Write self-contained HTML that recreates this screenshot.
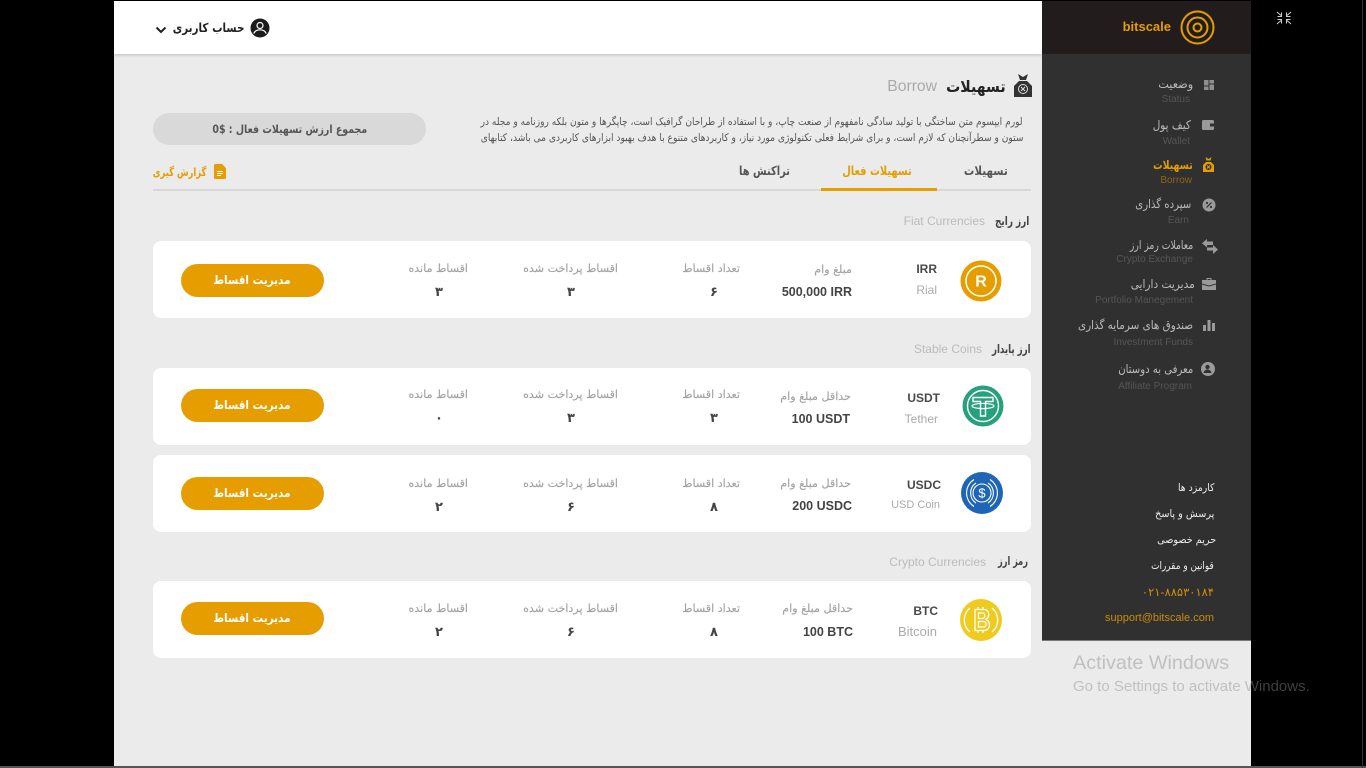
<!DOCTYPE html>
<html lang="fa"><head><meta charset="utf-8"><title>bitscale</title>
<style>
html,body{margin:0;padding:0;width:1366px;height:768px;overflow:hidden;background:#000;font-family:"Liberation Sans","DejaVu Sans",sans-serif}
.a{position:absolute}
.t{position:absolute;white-space:nowrap;line-height:18px;height:18px;margin-top:-8px}
.p{direction:rtl;font-family:"DejaVu Sans","Liberation Sans",sans-serif;transform-origin:100% 50%;transform:scaleX(var(--s,1))}
.c{transform-origin:50% 50%;transform:translateX(50%) scaleX(var(--s,1))}
.card{position:absolute;left:153px;width:878px;height:77px;background:#fff;border-radius:8px}
.btn{position:absolute;left:181px;width:143px;height:33px;background:#e59d00;border-radius:17px}
.lb{font-size:11.100px;color:#a3a3a3;-webkit-text-stroke:.15px #a3a3a3;margin-top:-7px}
.v{font-size:13px;color:#444;font-weight:bold;margin-top:-7px}
.sym{font-size:12px;font-weight:bold;color:#4a4a4a}
.nm{font-size:12px;color:#aaa}
.bt{font-size:12px;color:#fff;font-weight:bold;--s:.87}
.am{font-size:12.500px;font-weight:bold;color:#444}
.m1{font-size:12px;color:#bbb;margin-top:-9px}
.m2{font-size:10px;color:#555;margin-top:-7px}
.f{font-size:10.500px;color:#eee;margin-top:-9px}
svg{position:absolute;display:block}
</style></head><body>

<div class="a" style="left:114px;top:1px;width:1137px;height:765px;background:#ebebeb"></div>
<div class="a" style="left:0;top:766px;width:1366px;height:2px;background:#555"></div>
<div class="a" style="left:1362px;top:0;width:1px;height:768px;background:#333"></div>
<div class="a" style="left:114px;top:1px;width:928px;height:53px;background:#fff;box-shadow:0 1px 3px rgba(0,0,0,.2)"></div>

<!-- sidebar -->
<div class="a" style="left:1042px;top:1px;width:209px;height:640px;background:#303030;border-bottom:1px solid #777;box-sizing:border-box"></div>
<div class="a" style="left:1042px;top:1px;width:209px;height:53px;background:#231c1c"></div>
<div class="t" style="right:195px;top:26px;font-size:13px;font-weight:bold;color:#e59d00">bitscale</div>
<svg style="left:1180px;top:10px" width="35" height="35" viewBox="0 0 35 35" fill="none" stroke="#e59d00" stroke-width="2"><circle cx="17.500" cy="17.500" r="16"/><circle cx="17.500" cy="17.500" r="10"/><circle cx="17.500" cy="17.500" r="4"/></svg>

<svg style="left:1276px;top:11px" width="16" height="14" viewBox="0 0 16 14" fill="none" stroke="#ccc" stroke-width="1"><path d="M1 1l4 3.500M5.500 1.500v4h-4M15 1l-4 3.500M10.500 1.500v4h4M1 13l4-3.500M5.500 12.500v-4h-4M15 13l-4-3.500M10.500 12.500v-4h4"/></svg>

<div class="t p m1" style="right:173px;top:84px;--s:.94">وضعیت</div>
<div class="t m2" style="right:176px;top:98px">Status</div>
<svg style="left:1204px;top:80px" width="10" height="10" viewBox="0 0 10 10" fill="#8f8f8f"><rect width="4.500" height="5.500"/><rect y="6.500" width="4.500" height="3.500"/><rect x="5.500" width="4.500" height="3.500"/><rect x="5.500" y="4.500" width="4.500" height="5.500"/></svg>

<div class="t p m1" style="right:175px;top:125px;--s:.87">کیف پول</div>
<div class="t m2" style="right:176px;top:140px">Wallet</div>
<svg style="left:1202px;top:120px" width="12" height="10" viewBox="0 0 12 10"><rect width="12" height="10" rx="1.500" fill="#9a9a9a"/><rect x="8" y="3.500" width="4" height="3" fill="#303030"/></svg>

<div class="t p m1" style="right:173px;top:165px;--s:.78;font-weight:bold;color:#e59d00">تسهیلات</div>
<div class="t m2" style="right:174px;top:179px;color:#8a6414">Borrow</div>
<svg style="left:1203px;top:157px" width="11" height="15" viewBox="0 0 11 15"><path d="M2.500 0l3 2 3-2-1 3.500h-4z" fill="#e59d00"/><path d="M3 5h5l3 3v7H0V8z" fill="#e59d00"/><circle cx="5.500" cy="10" r="3" fill="#303030"/><path d="M4 8.500l3 3M7 8.500l-3 3" stroke="#e59d00"/></svg>

<div class="t p m1" style="right:175px;top:204px;--s:.845">سپرده گذاری</div>
<div class="t m2" style="right:177px;top:219px">Earn</div>
<svg style="left:1202px;top:198px" width="14" height="14" viewBox="0 0 14 14"><circle cx="7" cy="7" r="6.500" fill="#9a9a9a"/><path d="M4.500 9.500l5-5" stroke="#303030" stroke-width="1.200"/><circle cx="5" cy="5" r="1.100" fill="#303030"/><circle cx="9" cy="9" r="1.100" fill="#303030"/></svg>

<div class="t p m1" style="right:173px;top:245px;--s:.77">معاملات رمز ارز</div>
<div class="t m2" style="right:173px;top:258px">Crypto Exchange</div>
<svg style="left:1202px;top:239px" width="16" height="15" viewBox="0 0 16 15" fill="#9a9a9a"><path d="M5 0v2.500h6v3.500H5V8.500L0 4.200zM11 6v2.500H5v3h6V15l5-4.500z"/></svg>

<div class="t p m1" style="right:171px;top:284px;--s:.88">مدیریت دارایی</div>
<div class="t m2" style="right:173px;top:299px">Portfolio Manegement</div>
<svg style="left:1202px;top:278px" width="14" height="12" viewBox="0 0 14 12" fill="#9a9a9a"><path d="M4.500 2V0h5v2H14v3.500L7 7.500 0 5.500V2zM5.500 1v1h3V1zM0 6.500l7 2 7-2V12H0z"/></svg>

<div class="t p m1" style="right:173px;top:325px;--s:.865">صندوق های سرمایه گذاری</div>
<div class="t m2" style="right:173px;top:341px">Investment Funds</div>
<svg style="left:1203px;top:320px" width="12" height="11" viewBox="0 0 12 11" fill="#9a9a9a"><rect y="5" width="3" height="6"/><rect x="4.500" width="3" height="11"/><rect x="9" y="3" width="3" height="8"/></svg>

<div class="t p m1" style="right:173px;top:369px;--s:.84">معرفی به دوستان</div>
<div class="t m2" style="right:174px;top:385px">Affiliate Program</div>
<svg style="left:1201px;top:362px" width="14" height="14" viewBox="0 0 14 14"><circle cx="7" cy="7" r="7" fill="#9a9a9a"/><circle cx="6.500" cy="5" r="2.200" fill="#303030"/><path d="M2.500 11c.6-2.500 2.300-3.500 4-3.500s3.400 1 4 3.500" fill="#303030"/></svg>

<div class="t p f" style="right:152px;top:488px;--s:.88">کارمزد ها</div>
<div class="t p f" style="right:152px;top:514px;--s:.92">پرسش و پاسخ</div>
<div class="t p f" style="right:150px;top:540px;--s:.92">حریم خصوصی</div>
<div class="t p f" style="right:152px;top:566px;--s:.85">قوانین و مقررات</div>
<div class="t" style="right:152px;top:591px;font-size:11.500px;color:#d18f0c;font-family:'DejaVu Sans',sans-serif">۰۲۱-۸۸۵۳۰۱۸۴</div>
<div class="t" style="right:152px;top:617px;font-size:11px;color:#c98c10">support@bitscale.com</div>

<!-- watermark -->
<div class="t" style="left:1073px;top:662px;font-size:19.800px;color:rgba(140,140,140,.45);line-height:24px;height:24px;margin-top:-11px">Activate Windows</div>
<div class="t" style="left:1073px;top:685px;font-size:15px;color:rgba(140,140,140,.45);margin-top:-7px">Go to Settings to activate Windows.</div>

<!-- header -->
<svg style="left:155px;top:26px" width="12" height="9" viewBox="0 0 12 9" fill="none" stroke="#222" stroke-width="2"><path d="M1.500 1.500L6 6l4.500-4.500"/></svg>
<div class="t p" style="right:1122px;top:28px;font-size:12.500px;--s:.83;font-weight:bold;color:#222;margin-top:-9px">حساب کاربری</div>
<svg style="left:250px;top:18px" width="20" height="20" viewBox="0 0 20 20"><circle cx="10" cy="10" r="9.500" fill="#1c1c1c"/><circle cx="10" cy="7.500" r="3" fill="none" stroke="#fff" stroke-width="1.200"/><path d="M3.800 15.500c1-2.800 3.300-3.700 6.200-3.700s5.200.9 6.200 3.700" fill="none" stroke="#fff" stroke-width="1.200"/></svg>

<!-- title -->
<svg style="left:1014px;top:74px" width="18" height="23" viewBox="0 0 18 23"><path d="M4 0l5 3 5-3-2 6H6z" fill="#333"/><path d="M5 7h8l5 5v11H0V12z" fill="#333"/><circle cx="9" cy="15" r="4.500" fill="none" stroke="#ddd" stroke-width="1"/><path d="M7 13l4 4M11 13l-4 4" stroke="#ddd"/></svg>
<div class="t p" style="right:360px;top:86px;font-size:16px;--s:.88;font-weight:bold;color:#222">تسهیلات</div>
<div class="t" style="right:429px;top:86px;font-size:15.700px;color:#aaa">Borrow</div>
<div class="t p" style="right:343px;top:121px;font-size:10.500px;--s:.865;color:#555">لورم ایپسوم متن ساختگی با تولید سادگی نامفهوم از صنعت چاپ، و با استفاده از طراحان گرافیک است، چاپگرها و متون بلکه روزنامه و مجله در</div>
<div class="t p" style="right:343px;top:137px;font-size:10.500px;--s:.865;color:#555">ستون و سطرآنچنان که لازم است، و برای شرایط فعلی تکنولوژی مورد نیاز، و کاربردهای متنوع با هدف بهبود ابزارهای کاربردی می باشد، کتابهای</div>

<div class="a" style="left:153px;top:113px;width:273px;height:32px;background:#d9d9d9;border-radius:16px"></div>
<div class="t p c" style="right:1076px;top:128px;font-size:11.500px;--s:.82;font-weight:bold;color:#555">مجموع ارزش تسهیلات فعال : <span dir="ltr" style="unicode-bidi:isolate">0$</span></div>

<!-- tabs -->
<div class="a" style="left:153px;top:189px;width:878px;height:2px;background:#d8d8d8"></div>
<div class="a" style="left:821px;top:188px;width:116px;height:3px;background:#e59d00"></div>
<div class="t p c" style="right:380px;top:170px;font-size:12.500px;--s:.83;font-weight:bold;color:#555">تسهیلات</div>
<div class="t p c" style="right:489px;top:170px;font-size:12.500px;--s:.79;font-weight:bold;color:#e59d00">تسهیلات فعال</div>
<div class="t p c" style="right:601px;top:170px;font-size:12.500px;--s:.79;font-weight:bold;color:#555">تراکنش ها</div>
<div class="t p" style="right:1160px;top:171px;font-size:11.500px;--s:.73;font-weight:bold;color:#e59d00">گزارش گیری</div>
<svg style="left:214px;top:164px" width="12" height="15" viewBox="0 0 12 15"><path d="M1.500 0H8l4 4v9.500a1.500 1.500 0 0 1-1.500 1.500h-9A1.500 1.500 0 0 1 0 13.500v-12A1.500 1.500 0 0 1 1.500 0z" fill="#e59d00"/><path d="M3 7.500h6M3 9.500h6M3 11.500h4" stroke="#fff" stroke-width="1"/></svg>

<!-- sections -->
<div class="t p" style="right:337px;top:220px;font-size:12px;--s:.74;font-weight:bold;color:#444">ارز رایج</div>
<div class="t" style="right:381px;top:220px;font-size:12px;color:#bbb">Fiat Currencies</div>
<div class="t p" style="right:335px;top:348px;font-size:12px;--s:.72;font-weight:bold;color:#444">ارز پایدار</div>
<div class="t" style="right:384px;top:348px;font-size:12px;color:#bbb">Stable Coins</div>
<div class="t p" style="right:338px;top:560px;font-size:12px;--s:.68;font-weight:bold;color:#444">رمز ارز</div>
<div class="t" style="right:380px;top:561px;font-size:12px;color:#bbb">Crypto Currencies</div>

<!-- card 1 -->
<div class="card" style="top:241px"></div>
<svg style="left:960px;top:260px" width="42" height="42" viewBox="0 0 42 42"><circle cx="21" cy="21" r="20.500" fill="#e59d00"/><circle cx="21" cy="21" r="15" fill="none" stroke="#fff" stroke-width="1.500"/><text x="21" y="26.500" text-anchor="middle" font-family="Liberation Sans" font-size="16" font-weight="bold" fill="#fff">R</text></svg>
<div class="t sym" style="right:429px;top:268px">IRR</div>
<div class="t nm" style="right:429px;top:289px">Rial</div>
<div class="t p lb" style="right:514px;top:268px">مبلغ وام</div>
<div class="t am" style="right:514px;top:291px">500,000 IRR</div>
<div class="t p lb" style="right:626px;top:267px">تعداد اقساط</div>
<div class="t p v c" style="right:652px;top:291px">۶</div>
<div class="t p lb" style="right:748px;top:267px">اقساط پرداخت شده</div>
<div class="t p v c" style="right:795px;top:291px">۳</div>
<div class="t p lb" style="right:898px;top:267px">اقساط مانده</div>
<div class="t p v c" style="right:927px;top:291px">۳</div>
<div class="btn" style="top:264px"></div>
<div class="t p bt c" style="right:1114px;top:279px">مدیریت اقساط</div>

<!-- card 2 -->
<div class="card" style="top:368px"></div>
<svg style="left:962px;top:385px" width="42" height="42" viewBox="0 0 42 42"><circle cx="21" cy="21" r="20.500" fill="#27a17c"/><circle cx="21" cy="21" r="15.500" fill="none" stroke="#fff" stroke-width="1.400"/><path d="M11 12.500h20v4h-7.500V31h-5V16.500H11z" fill="none" stroke="#fff" stroke-width="1.400"/><ellipse cx="21" cy="21" rx="11" ry="2.600" fill="none" stroke="#fff" stroke-width="1.200"/></svg>
<div class="t sym" style="right:426px;top:397px">USDT</div>
<div class="t nm" style="right:428px;top:418px">Tether</div>
<div class="t p lb" style="right:515px;top:395px">حداقل مبلغ وام</div>
<div class="t am" style="right:516px;top:418px">100 USDT</div>
<div class="t p lb" style="right:626px;top:393px">تعداد اقساط</div>
<div class="t p v c" style="right:652px;top:417px">۳</div>
<div class="t p lb" style="right:748px;top:393px">اقساط پرداخت شده</div>
<div class="t p v c" style="right:795px;top:417px">۳</div>
<div class="t p lb" style="right:898px;top:393px">اقساط مانده</div>
<div class="t p v c" style="right:927px;top:417px">۰</div>
<div class="btn" style="top:389px"></div>
<div class="t p bt c" style="right:1114px;top:404px">مدیریت اقساط</div>

<!-- card 3 -->
<div class="card" style="top:455px"></div>
<svg style="left:961px;top:472px" width="42" height="42" viewBox="0 0 42 42"><circle cx="21" cy="21" r="21" fill="#1f65b5"/><g fill="none" stroke="#fff" stroke-width="1.100"><circle cx="21" cy="21" r="9"/><path d="M13 7.500a16 16 0 0 0 0 27M29 7.500a16 16 0 0 1 0 27M15 11a12 12 0 0 0 0 20M27 11a12 12 0 0 1 0 20"/></g><text x="21" y="25.500" text-anchor="middle" font-family="Liberation Sans" font-size="13" fill="#fff">$</text></svg>
<div class="t sym" style="right:425px;top:484px">USDC</div>
<div class="t nm" style="right:426px;top:504px;font-size:11px">USD Coin</div>
<div class="t p lb" style="right:515px;top:482px">حداقل مبلغ وام</div>
<div class="t am" style="right:514px;top:505px">200 USDC</div>
<div class="t p lb" style="right:626px;top:482px">تعداد اقساط</div>
<div class="t p v c" style="right:652px;top:506px">۸</div>
<div class="t p lb" style="right:748px;top:482px">اقساط پرداخت شده</div>
<div class="t p v c" style="right:795px;top:506px">۶</div>
<div class="t p lb" style="right:898px;top:482px">اقساط مانده</div>
<div class="t p v c" style="right:927px;top:506px">۲</div>
<div class="btn" style="top:477px"></div>
<div class="t p bt c" style="right:1114px;top:492px">مدیریت اقساط</div>

<!-- card 4 -->
<div class="card" style="top:581px"></div>
<svg style="left:960px;top:599px" width="42" height="42" viewBox="0 0 42 42"><circle cx="21" cy="21" r="21" fill="#f0cb1f"/><path d="M10 9a15.500 15.500 0 0 0 0 24M32 9a15.500 15.500 0 0 1 0 24" fill="none" stroke="#fff" stroke-width="1.300"/><path d="M15 10.500h9c6 0 6 8.500 1.500 10 5.500 1 5.500 11-1.500 11h-9zM18.500 14v5.500h4c3 0 3-5.500 0-5.500zM18.500 22.500v5.500h5c3.500 0 3.500-5.500 0-5.500zM18 8v3M23 8v3M18 31v3M23 31v3" fill="none" stroke="#fff" stroke-width="1.300"/></svg>
<div class="t sym" style="right:428px;top:610px">BTC</div>
<div class="t nm" style="right:429px;top:631px;font-size:13px">Bitcoin</div>
<div class="t p lb" style="right:513px;top:607px">حداقل مبلغ وام</div>
<div class="t am" style="right:513px;top:631px">100 BTC</div>
<div class="t p lb" style="right:626px;top:607px">تعداد اقساط</div>
<div class="t p v c" style="right:652px;top:631px">۸</div>
<div class="t p lb" style="right:748px;top:607px">اقساط پرداخت شده</div>
<div class="t p v c" style="right:795px;top:631px">۶</div>
<div class="t p lb" style="right:898px;top:607px">اقساط مانده</div>
<div class="t p v c" style="right:927px;top:631px">۲</div>
<div class="btn" style="top:602px"></div>
<div class="t p bt c" style="right:1114px;top:617px">مدیریت اقساط</div>

</body></html>
